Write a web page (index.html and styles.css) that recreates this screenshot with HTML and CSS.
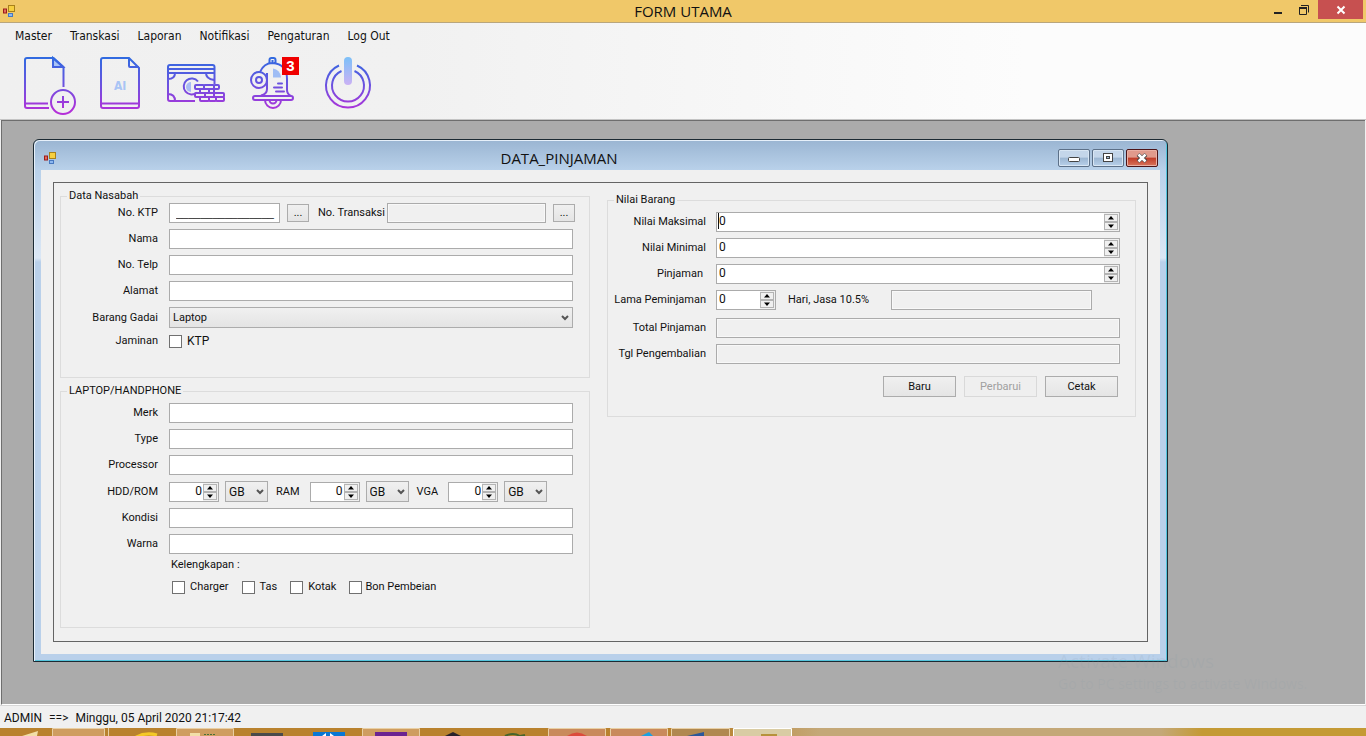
FILE: index.html
```html
<!DOCTYPE html>
<html lang="id">
<head>
<meta charset="utf-8">
<title>FORM UTAMA</title>
<link rel="stylesheet" href="styles.css">
</head>
<body>
<svg class="defs" aria-hidden="true">
  <defs>
    <linearGradient id="ink" gradientUnits="userSpaceOnUse" x1="0" y1="57" x2="0" y2="112"><stop offset="0" stop-color="#2f6be0"/><stop offset=".5" stop-color="#6a52e0"/><stop offset="1" stop-color="#b42fd8"/></linearGradient>
    <linearGradient id="tint" gradientUnits="userSpaceOnUse" x1="0" y1="57" x2="0" y2="88"><stop offset="0" stop-color="#7cc0f8"/><stop offset="1" stop-color="#d3b0f4"/></linearGradient>
    <symbol id="forms" viewBox="0 0 14 14"><rect x="5.500" y="1.500" width="6" height="6" fill="#f6cf3f" stroke="#a8811a"/><rect x=".5" y="5" width="3" height="4" fill="#e46a5a" stroke="#9a1c1c"/><rect x="5.500" y="9.500" width="4" height="3" fill="#8db8f0" stroke="#4878c0"/></symbol>
    <symbol id="chevron" viewBox="0 0 8 6"><path d="M1 1l3 3 3-3" fill="none" stroke="#555" stroke-width="2"/></symbol>
    <symbol id="up" viewBox="0 0 6 4"><path d="M0 3.500L3 0l3 3.500z"/></symbol>
    <symbol id="down" viewBox="0 0 6 4"><path d="M0 .5L3 4l3-3.500z"/></symbol>
  </defs>
</svg>

<header class="titlebar">
  <svg class="appicon"><use href="#forms"/></svg>
  <h1>FORM UTAMA</h1>
  <div class="wincontrols">
    <button type="button" aria-label="Minimize"><svg width="12" height="12"><path d="M2 9h8" stroke="#222" stroke-width="2"/></svg></button>
    <button type="button" aria-label="Restore"><svg width="12" height="12" fill="none" stroke="#222"><path d="M3 1.500h7.500v7"/><path d="M1.500 4h7v6.500h-7z"/><path d="M1 4h8" stroke-width="2"/></svg></button>
    <button type="button" class="close" aria-label="Close"><svg width="10" height="10"><path d="M1.500 1.500l7 7m0-7l-7 7" stroke="#fff" stroke-width="2"/></svg></button>
  </div>
</header>

<div class="ribbon">
  <nav class="menu">
    <a href="#">Master</a><a href="#">Transkasi</a><a href="#">Laporan</a><a href="#">Notifikasi</a><a href="#">Pengaturan</a><a href="#">Log Out</a>
  </nav>
  <div class="tools">
    <button type="button" aria-label="Tambah">
      <svg viewBox="6 54 76 62" fill="none" stroke="url(#ink)" stroke-width="2">
        <path d="M53 58v9h10z" fill="#a9c4f5"/><path d="M63.500 87V67l-10-9H27q-2 0-2 2v46q0 2 2 2h22M25 103.500h23"/>
        <circle cx="63" cy="102" r="12"/><path d="M57 102h12M63 96v12"/>
      </svg>
    </button>
    <button type="button" aria-label="Dokumen">
      <svg viewBox="82 54 76 62" fill="none" stroke="url(#ink)" stroke-width="2">
        <path d="M129 58v8q0 1 1 1h9M129 58h-26q-2 0-2 2v46q0 2 2 2h34q2 0 2-2V68zM101 103.500h38"/>
        <text class="doctext" x="114" y="90">AI</text>
      </svg>
    </button>
    <button type="button" aria-label="Pinjaman">
      <svg viewBox="158 54 76 62" fill="none" stroke="url(#ink)" stroke-width="2">
        <path d="M214.500 84V67q0-2-2-2H170q-2 0-2 2v32q0 2 2 2h25M168 69h46M168 73h46M175 73q0 6-7 6M168 94q7 0 7 7M206 73q0 6 8 7"/>
        <path d="M198 81.500a8 8 0 1 0-1 11"/><path d="M191 82a5 5 0 0 0 0 10z" fill="#a9bcf5" stroke="none"/>
        <rect x="195" y="85" width="9" height="4" rx="1"/><rect x="204" y="85" width="10" height="4" rx="1"/>
        <rect x="200" y="89" width="9" height="4" rx="1"/><rect x="209" y="89" width="5" height="4" rx="1"/>
        <path d="M214 89h4"/><rect x="214" y="85" width="5" height="4" rx="1"/>
        <rect x="195" y="93" width="10" height="4" rx="1"/><rect x="205" y="93" width="9" height="4" rx="1"/><rect x="214" y="93" width="10" height="4" rx="1"/>
        <rect x="200" y="97" width="9" height="4" rx="1"/><rect x="209" y="97" width="7" height="4" rx="1"/><rect x="216" y="97" width="8" height="4" rx="1"/>
      </svg>
    </button>
    <button type="button" aria-label="Notifikasi, 3 baru">
      <svg viewBox="234 54 76 62" fill="none" stroke="url(#ink)" stroke-width="2">
        <path d="M269.500 63v-3q0-2 2-2h2q2 0 2 2v3M272.500 60v3M260 72q4-9 12.500-9Q287 64 287 79v11q0 4 4 6M267 81v8q0 5-6 6.500"/>
        <path d="M273 68.500a9 9 0 0 1 8 9h-8z" fill="#9fbdf5" stroke="none"/>
        <circle cx="259" cy="80" r="8"/><circle cx="259" cy="80" r="3"/><path d="M267 73v14"/>
        <path d="M278 83.500h4M274 87.500h8M276 91.500h8" stroke-linecap="round"/>
        <rect x="253" y="96" width="40" height="4" rx="2"/><path d="M265 100a8 8 0 0 0 16 0M269.500 100a3.500 3.500 0 0 0 7 0"/>
      </svg>
      <span class="badge">3</span>
    </button>
    <button type="button" aria-label="Keluar">
      <svg viewBox="310 54 76 62" fill="none" stroke="url(#ink)" stroke-width="2">
        <path d="M339 65.500A22 22 0 1 0 357 65.500"/><path d="M341.500 71A16 16 0 1 0 354.500 71"/>
        <rect x="344" y="57" width="8" height="28" rx="4" fill="url(#tint)" stroke="none"/>
      </svg>
    </button>
  </div>
</div>

<main class="workspace">
  <section class="child">
    <header class="childbar">
      <svg class="appicon"><use href="#forms"/></svg>
      <h2>DATA_PINJAMAN</h2>
      <div class="childcontrols">
        <button type="button" aria-label="Minimize"><svg width="12" height="10"><rect x=".5" y="4.500" width="11" height="4" rx="1" fill="#fff" stroke="#444"/></svg></button>
        <button type="button" aria-label="Maximize"><svg width="12" height="10"><rect x="1.500" y=".5" width="9" height="8" fill="#fff" stroke="#444"/><rect x="4.500" y="3.500" width="3" height="2" fill="#9db9d6" stroke="#444"/></svg></button>
        <button type="button" class="close" aria-label="Close"><svg width="12" height="10"><path d="M2 1.500l8 7m0-7l-8 7" stroke="#444" stroke-width="4"/><path d="M2.500 1.500l7 7m0-7l-7 7" stroke="#fff" stroke-width="2.500"/></svg></button>
      </div>
    </header>
    <form class="panel">
      <div class="column">
        <fieldset>
          <legend>Data Nasabah</legend>
          <div class="rows">
            <div class="row topline">
              <label class="name" for="ktp">No. KTP</label>
              <input class="masked" id="ktp" value="________________">
              <button type="button" class="dots">...</button>
              <label for="trx" class="trx">No. Transaksi</label>
              <input class="grow" id="trx" disabled>
              <button type="button" class="dots">...</button>
            </div>
            <div class="row"><label class="name" for="nama">Nama</label><input class="grow" id="nama"></div>
            <div class="row"><label class="name" for="telp">No. Telp</label><input class="grow" id="telp"></div>
            <div class="row"><label class="name" for="alamat">Alamat</label><input class="grow" id="alamat"></div>
            <div class="row"><label class="name" for="gadai">Barang Gadai</label><span class="select grow"><select id="gadai"><option>Laptop</option></select><svg><use href="#chevron"/></svg></span></div>
            <div class="row low"><span class="name">Jaminan</span><label class="check large"><input type="checkbox">KTP</label></div>
          </div>
        </fieldset>
        <fieldset>
          <legend>LAPTOP/HANDPHONE</legend>
          <div class="rows">
            <div class="row"><label class="name" for="merk">Merk</label><input class="grow" id="merk"></div>
            <div class="row"><label class="name" for="type">Type</label><input class="grow" id="type"></div>
            <div class="row"><label class="name" for="proc">Processor</label><input class="grow" id="proc"></div>
            <div class="row">
              <label class="name" for="hdd">HDD/ROM</label>
              <span class="spin size"><input type="number" id="hdd" value="0"><span class="arrows"><button type="button" aria-label="Naik"><svg><use href="#up"/></svg></button><button type="button" aria-label="Turun"><svg><use href="#down"/></svg></button></span></span>
              <span class="select unit"><select aria-label="Satuan HDD"><option>GB</option></select><svg><use href="#chevron"/></svg></span>
              <label class="short" for="ram">RAM</label>
              <span class="spin size"><input type="number" id="ram" value="0"><span class="arrows"><button type="button" aria-label="Naik"><svg><use href="#up"/></svg></button><button type="button" aria-label="Turun"><svg><use href="#down"/></svg></button></span></span>
              <span class="select unit"><select aria-label="Satuan RAM"><option>GB</option></select><svg><use href="#chevron"/></svg></span>
              <label class="short" for="vga">VGA</label>
              <span class="spin size"><input type="number" id="vga" value="0"><span class="arrows"><button type="button" aria-label="Naik"><svg><use href="#up"/></svg></button><button type="button" aria-label="Turun"><svg><use href="#down"/></svg></button></span></span>
              <span class="select unit"><select aria-label="Satuan VGA"><option>GB</option></select><svg><use href="#chevron"/></svg></span>
            </div>
            <div class="row"><label class="name" for="kondisi">Kondisi</label><input class="grow" id="kondisi"></div>
            <div class="row"><label class="name" for="warna">Warna</label><input class="grow" id="warna"></div>
          </div>
          <div class="extras">
            <span>Kelengkapan :</span>
            <div class="checks">
              <label class="check"><input type="checkbox">Charger</label>
              <label class="check"><input type="checkbox">Tas</label>
              <label class="check"><input type="checkbox">Kotak</label>
              <label class="check tight"><input type="checkbox">Bon Pembeian</label>
            </div>
          </div>
        </fieldset>
      </div>
      <div class="column value">
        <fieldset>
          <legend>Nilai Barang</legend>
          <div class="rows">
            <div class="row"><label class="name" for="maks">Nilai Maksimal</label><span class="spin grow focused"><input type="number" id="maks" value="0"><span class="arrows"><button type="button" aria-label="Naik"><svg><use href="#up"/></svg></button><button type="button" aria-label="Turun"><svg><use href="#down"/></svg></button></span></span></div>
            <div class="row"><label class="name" for="min">Nilai Minimal</label><span class="spin grow"><input type="number" id="min" value="0"><span class="arrows"><button type="button" aria-label="Naik"><svg><use href="#up"/></svg></button><button type="button" aria-label="Turun"><svg><use href="#down"/></svg></button></span></span></div>
            <div class="row"><label class="name inset" for="pinj">Pinjaman</label><span class="spin grow"><input type="number" id="pinj" value="0"><span class="arrows"><button type="button" aria-label="Naik"><svg><use href="#up"/></svg></button><button type="button" aria-label="Turun"><svg><use href="#down"/></svg></button></span></span></div>
            <div class="row term"><label class="name" for="lama">Lama Peminjaman</label><span class="spin days"><input type="number" id="lama" value="0"><span class="arrows"><button type="button" aria-label="Naik"><svg><use href="#up"/></svg></button><button type="button" aria-label="Turun"><svg><use href="#down"/></svg></button></span></span><label class="fee" for="jasa">Hari, Jasa 10.5%</label><input class="grow feebox" id="jasa" disabled></div>
            <div class="row"><label class="name" for="total">Total Pinjaman</label><input class="grow" id="total" disabled></div>
            <div class="row"><label class="name" for="tgl">Tgl Pengembalian</label><input class="grow" id="tgl" disabled></div>
          </div>
          <div class="actions"><button type="button">Baru</button><button type="button" disabled>Perbarui</button><button type="button">Cetak</button></div>
        </fieldset>
      </div>
    </form>
  </section>
  <div class="watermark"><strong>Activate Windows</strong><span>Go to PC settings to activate Windows.</span></div>
</main>

<footer class="status"><span>ADMIN</span><span>==&gt;</span><span>Minggu, 05 April 2020 21:17:42</span></footer>
<div class="taskbar">
  <svg width="800" height="8" aria-hidden="true">
    <g fill="#cf9d60" stroke="#e8cfa4"><path d="M52.500 9V.5h52V9M176.500 9V.5h57V9M362.500 9V.5h57V9" /><path d="M108.500 0v8" /><path fill="#c98a5c" d="M548.500 9V.5h57V9M610.500 9V.5h57V9"/><path fill="#b08850" d="M671.500 9V.5h58V9"/></g>
    <path fill="#d9cca4" stroke="#fff" d="M733.500 9V.5h58V9"/>
    <path fill="#f2dfa8" d="M22 8l16-5-1 5zM190 5h10v3h-10z"/><path fill="none" stroke="#f5c927" stroke-width="3" d="M136 9q10-5 21-2"/>
    <path stroke="#487038" stroke-dasharray="2 1" d="M204 6.500h12"/>
    <path fill="#4a4a4a" d="M251 5h32v3h-32z"/><path fill="#0877d4" d="M313 4h32v4h-32z"/><path fill="#fff" d="M322 8l4-3v3zm8 0V5l4 3z"/>
    <path fill="#6b2391" d="M375 4h32v4h-32z"/><path fill="#28212a" d="M445 8l8-4 8 4z"/><path fill="none" stroke="#46652b" stroke-width="2" d="M505 8q8-4 15 0l5-1"/>
    <path fill="#dc4b3c" d="M567 8q10-7 20 0z"/><path fill="#1ba1e2" d="M641 8l8-4 4 4z"/><path fill="#2b579a" d="M687 8l17-4v4z"/><path fill="#b6923c" d="M761 8V6h16v2z"/>
  </svg>
</div>
</body>
</html>
```

FILE: styles.css
```css
* { box-sizing: border-box; }
body {
  margin: 0;
  min-height: 100vh;
  display: flex;
  flex-direction: column;
  background: #f0f0f0;
  color: #111;
  font: 11px/14px Roboto, "Liberation Sans", sans-serif;
}
button, input, select { font: inherit; color: inherit; margin: 0; padding: 0; }
h1, h2 { margin: 0; font: 15px/22px "Open Sans", "Noto Sans", sans-serif; }
.defs { position: absolute; width: 0; height: 0; }
.appicon { width: 14px; height: 14px; }

/* main window caption */
.titlebar {
  display: grid;
  grid-template-columns: 1fr auto 1fr;
  align-items: start;
  height: 23px;
  padding: 0 3px;
  background: #f0c869;
  border-bottom: 1px solid #b9a67c;
}
.titlebar .appicon { margin-top: 4px; }
.wincontrols { display: flex; justify-content: flex-end; }
.wincontrols button { width: 26px; height: 19px; border: 0; background: none; display: grid; place-items: center; }
.wincontrols .close { width: 45px; margin-left: 1px; background: #c75050; }

/* menu and tool strip */
.ribbon {
  height: 97px;
  background: linear-gradient(90deg, #f0f0f0, #f1f1f1 30%, #fcfcfc 75%);
  border-bottom: 1px solid #c4c4c4;
}
.menu { display: flex; gap: 18px; padding: 4px 15px 0; font: 12px/18px "DejaVu Sans Condensed", "DejaVu Sans", sans-serif; }
.menu a { color: #111; text-decoration: none; }
.tools { display: flex; padding: 9px 6px 0; }
.tools button { position: relative; width: 76px; height: 62px; border: 0; background: none; }
.tools svg { display: block; width: 76px; height: 62px; }
.doctext { font: bold 12px "DejaVu Sans Condensed", sans-serif; fill: #a9c4f5; stroke: none; }
.badge {
  position: absolute; left: 48px; top: 3px;
  width: 17px; height: 18px;
  background: #f00000; color: #fff;
  font: bold 15px/18px "Liberation Sans", sans-serif;
  text-align: center;
}

/* workspace */
.workspace {
  position: relative;
  flex: 1;
  margin: 0 1px;
  padding: 18px 197px 42px 32px;
  background: #ababab;
  border-top: 1px solid #6e6e6e;
  border-left: 1px solid #6e6e6e;
  border-bottom: 1px solid #fff;
}
.child {
  margin-left: -1px;
  padding: 0 7px 7px;
  background: linear-gradient(#9ab5d2, #b9d1ea 30px, #dbe7f5 118px, #b9d0ea 122px);
  border: 1px solid #1c2a33;
  border-radius: 6px 6px 0 0;
  box-shadow: inset 1px 1px #e6f0fa, inset -1px -1px #54c4dc;
}
.childbar {
  display: grid;
  grid-template-columns: 1fr auto 1fr;
  height: 30px;
  padding: 0 2px 0 3px;
}
.childbar .appicon { margin-top: 11px; }
.childbar h2 { line-height: 36px; padding-right: 84px; }
.childcontrols { display: flex; justify-content: flex-end; gap: 2px; padding-top: 9px; }
.childcontrols button {
  width: 32px; height: 18px;
  display: grid; place-items: center;
  border: 1px solid #5c7088; border-radius: 2px;
  background: linear-gradient(#c4d6ea 45%, #9cb6d2 50%, #b8d0ea);
  box-shadow: inset 0 0 0 1px #d8e6f4;
}
.childcontrols .close {
  border-color: #4c1418;
  background: linear-gradient(#e09a8c 45%, #c03c28 50%, #d8755c);
  box-shadow: inset 0 0 0 1px #eab0a4;
}
.panel {
  display: grid;
  grid-template-columns: 530fr 529fr;
  gap: 17px;
  padding: 6px 11px 13px 6px;
  border: 1px solid #646464;
  outline: 12px solid #f0f0f0;
  margin: 12px;
  background: #f0f0f0;
}
.column { display: flex; flex-direction: column; gap: 6px; }
.column.value { padding-top: 4px; }

/* groups */
fieldset { margin: 0; min-width: 0; padding: 0 16px 29px 0; border: 1px solid #dcdcdc; }
legend { margin-left: 6px; padding: 0 2px; }
.rows { display: flex; flex-direction: column; gap: 6px; }
.column fieldset + fieldset { padding-bottom: 33px; }
.column fieldset + fieldset .rows { padding-top: 5px; }
.row { display: flex; align-items: center; min-height: 20px; }
.row.low { min-height: 14px; }
.name { width: 97px; margin-right: 11px; text-align: right; white-space: nowrap; }
.grow { flex: 1; min-width: 0; }
.row input:not([type]), .spin { height: 20px; border: 1px solid #ababab; border-radius: 0; background: #fff; }
.row input:disabled { background: #f0f0f0; box-shadow: inset 0 0 0 1px #f8f8f8; }
.row .masked { width: 111px; padding-left: 6px; font-family: "Liberation Sans", sans-serif; }
.dots {
  width: 22px; height: 18px; margin-left: 7px;
  border: 1px solid #acacac;
  background: linear-gradient(#f0f0f0, #e4e4e4);
}
.topline { margin-right: -2px; }
.trx { margin: 0 2px 0 9px; white-space: nowrap; }

/* drop-down: the arrow shares the grid cell of the list */
.select { display: grid; grid-template-columns: 1fr; align-items: center; height: 21px; }
.select > * { grid-area: 1 / 1; }
.select select {
  appearance: none;
  width: 100%; height: 21px; padding-left: 3px;
  border: 1px solid #acacac; border-radius: 0;
  background: linear-gradient(#f0f0f0, #e4e4e4);
}
.select svg { justify-self: end; width: 8px; height: 6px; margin-right: 4px; pointer-events: none; }
.unit { width: 43px; margin-left: 6px; font-size: 12px; }
.short { padding: 0 10px 0 8px; }

/* number box */
.spin { display: flex; }
.spin input {
  flex: 1; width: 0; min-width: 0; height: 16px; padding-left: 2px;
  border: 0; outline: 0; background: none; appearance: textfield;
  font-size: 12px;
}
.spin input::-webkit-inner-spin-button { appearance: none; }
.focused input { border-left: 1px solid #111; padding-left: 0; margin-left: 1px; }
.arrows { display: flex; flex-direction: column; width: 15px; padding: 1px 1px 1px 0; background: #f0f0f0; }
.arrows button { flex: 1; display: grid; place-items: center; border: 1px solid #b4b4b4; background: #f0f0f0; min-height: 0; }
.arrows svg { width: 6px; height: 4px; }
.size { width: 50px; }
.size input { text-align: right; padding-right: 1px; }
.days { width: 60px; }
.fee { width: 115px; padding-left: 12px; white-space: nowrap; }
.row .feebox { margin-right: 28px; }
.inset { padding-right: 3px; }
.term { padding-bottom: 2px; }

/* tick boxes */
.check { display: flex; align-items: center; gap: 5px; }
.check.large { font-size: 12px; }
.check.tight { gap: 3px; }
.check input { appearance: none; width: 13px; height: 13px; border: 1px solid #707070; background: #fff; }
.extras { padding: 4px 0 0 110px; }
.checks { display: flex; gap: 13px; margin: 8px 0 0 1px; }

/* right group */
.value fieldset { padding: 0 15px 19px 0; }
.value legend ~ .rows { padding-top: 5px; }
.value .name { width: 98px; margin-right: 10px; }
.actions { display: flex; justify-content: flex-end; gap: 8px; padding: 12px 2px 0 0; }
.actions button {
  width: 73px; height: 21px;
  border: 1px solid #acacac;
  background: linear-gradient(#f0f0f0, #e5e5e5);
}
.actions button:disabled { color: #a0a0a0; border-color: #d9d9d9; background: #efefef; }

.watermark {
  position: absolute; right: 54px; bottom: 10px;
  width: 253px;
  display: flex; flex-direction: column;
  color: rgba(130, 150, 165, .13);
  font: 14px/20px "Open Sans", sans-serif;
  white-space: nowrap;
  pointer-events: none;
}
.watermark strong { font-weight: 400; font-size: 19px; line-height: 26px; }

.status {
  display: flex; gap: 7px;
  height: 23px; padding: 3px 4px 0;
  border-top: 1px solid #d7d7d7;
  font-size: 12px; line-height: 18px;
}
.taskbar { height: 8px; background: linear-gradient(90deg, #b9822e 52%, #c4a878 60%, #c4a878 85%, #c49a35 88%); overflow: hidden; }
.taskbar svg { display: block; }
```
